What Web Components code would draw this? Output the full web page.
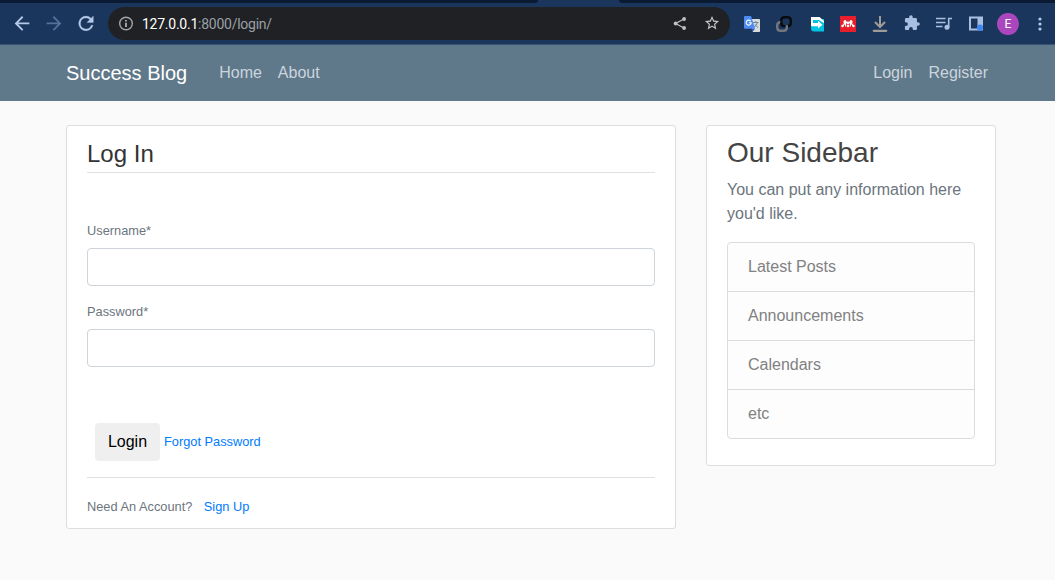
<!DOCTYPE html>
<html lang="en">
<head>
<meta charset="utf-8">
<title>Login</title>
<style>
body{margin:0;background:#fafafa;color:#333;font:16px/24px "Liberation Sans",Arial,sans-serif;height:580px;overflow:hidden}
main{display:flex;gap:30px;align-items:flex-start;width:930px;margin:24px 0 0 66px}
</style>
</head>
<body>
<browser-bar></browser-bar>
<site-nav></site-nav>
<main>
  <content-card style="--w:610px;--h:404px"><login-form></login-form></content-card>
  <content-card style="--w:290px;--h:341px"><side-bar></side-bar></content-card>
</main>
<script>
const define = (name, html) => customElements.define(name, class extends HTMLElement {
  constructor() {
    super();
    this.attachShadow({ mode: 'open' }).innerHTML = html;
  }
});

define('tool-slot', `
<style>:host{display:flex;width:32px;height:32px;flex:none;align-items:center;justify-content:center}</style><slot></slot>`);

define('browser-bar', `
<style>
:host{display:flex;flex-direction:column;height:45px;background:#1b365d;box-sizing:border-box;border-bottom:1px solid #3a5474;overflow:hidden}
.tabs{display:flex;justify-content:space-between;height:3px;flex:none}
.tabs i{background:#0b1a33;height:3px}
.l{width:538px;border-bottom-right-radius:4px}.r{width:436px;border-bottom-left-radius:4px}
.row{display:flex;align-items:center;height:41px;padding-left:6px;box-sizing:border-box}
.pill{display:flex;align-items:center;box-sizing:border-box;width:622px;height:33px;margin:0 6px;padding:0 2px 0 10px;border-radius:17px;background:#202124;flex:none}
.url{flex:1;margin-left:8px;font:14px/20px Roboto,sans-serif;letter-spacing:-.25px;color:#9aa0a6;white-space:nowrap}
.url b{font-weight:400;color:#fff}
svg{display:block;flex:none}
.avatar{width:22px;height:22px;border-radius:50%;background:#ab47bc;color:#fff;font:12px/22px Roboto,sans-serif;text-align:center}
</style>
<div class="tabs"><i class="l"></i><i class="r"></i></div>
<div class="row">
<tool-slot><svg width="22" height="22" viewBox="0 0.6 24 24" fill="#b5c9e8"><path d="M20 11H7.83l5.59-5.59L12 4l-8 8 8 8 1.41-1.41L7.83 13H20z"/></svg></tool-slot>
<tool-slot><svg width="22" height="22" viewBox="0 0.6 24 24" fill="#56709a"><path d="M4 11h12.17l-5.59-5.59L12 4l8 8-8 8-1.41-1.41L16.17 13H4z"/></svg></tool-slot>
<tool-slot><svg width="22" height="22" viewBox="0 0.6 24 24" fill="#b5c9e8"><path d="M17.65 6.35A7.96 7.96 0 0 0 12 4a8 8 0 1 0 7.73 10h-2.08A6 6 0 1 1 12 6c1.66 0 3.14.69 4.22 1.78L13 11h7V4z" stroke="#b5c9e8" stroke-width=".3"/></svg></tool-slot>
<div class="pill">
<svg width="16" height="16" viewBox="0 0 16 16"><circle cx="8" cy="7.500" r="6.300" fill="none" stroke="#a3a7ab" stroke-width="1.400"/><path d="M7.200 6.700h1.600v4.200H7.200zM7.200 4h1.600v1.600H7.200z" fill="#bdc1c6"/></svg>
<span class="url"><b>127.0.0.1</b>:8000/login/</span>
<tool-slot><svg width="16" height="16" viewBox="0 0 16 16" fill="#bfc1c4"><path d="m12 3-8.500 4.500L12 12" fill="none" stroke="#bfc1c4" stroke-width="1.200"/><circle cx="12.100" cy="3" r="1.900"/><circle cx="3.600" cy="7.500" r="1.900"/><circle cx="12.100" cy="12" r="1.900"/></svg></tool-slot>
<tool-slot><svg width="17" height="17" viewBox=".7 .7 24 24" fill="#c4c6c9"><path d="M22 9.240l-7.190-.62L12 2 9.190 8.630 2 9.240l5.460 4.730L5.820 21 12 17.270 18.180 21l-1.630-7.030L22 9.240zM12 15.400l-3.760 2.270 1-4.280-3.320-2.880 4.380-.38L12 6.100l1.710 4.040 4.380.38-3.320 2.880 1 4.280L12 15.400z"/></svg></tool-slot>
</div>
<tool-slot><svg width="16" height="16" viewBox="0 0 16 16"><path d="M6 3h9.2q.8 0 .8.8v11.4q0 .8-.8.8H9z" fill="#d9dcdd"/><path d="M9 6.500h5.500M11.800 5v1.500M13.500 6.500Q12.500 10 10 11M10.800 8.500l3.400 3.200" stroke="#718692" fill="none"/><path d="M7.500 12.800h3.600L8.300 16z" fill="#3b54a8"/><path d="M1 0h6l4.200 12.800H1q-1 0-1-1V1q0-1 1-1z" fill="#4d8bf5"/><path d="M6.700 5.100A2.500 2.500 0 1 0 7.200 6.700H4.900" stroke="#fff" stroke-width="1.100" fill="none"/></svg></tool-slot>
<tool-slot><svg width="16" height="16" viewBox="0 0 16 16" fill="none" stroke-width="2.400"><path d="M5.200 7V4.500q0-3.300 3.300-3.300h3q3.300 0 3.300 3.300v2.300q0 3.300-3.300 3.300" stroke="#090b0e"/><path d="M4.500 6.200q-3.300 0-3.300 3.300v2q0 3.300 3.300 3.300h3q3.300 0 3.300-3.300V9.300" stroke="#73777d"/><path d="M5.200 6.400q0 3.700 3.300 3.700h.9" stroke="#090b0e"/></svg></tool-slot>
<tool-slot><svg width="16" height="16" viewBox="0 0 16 16"><path d="M4 3h12v12.500H6q-3 0-3-3z" fill="#00c4e4"/><path d="M3 1h8.500L16 5v2l-5-3H5v3h5V4.800l4.500 3.900-4.500 3.900v-2.400H3z" fill="#fff"/></svg></tool-slot>
<tool-slot><svg width="16" height="16" viewBox="0 0 16 16"><path d="M0 0h16v16H0z" fill="#e81e2c"/><g fill="#fff"><circle cx="5" cy="5.600" r="1.500"/><circle cx="8" cy="7" r="1.400"/><circle cx="11" cy="5.600" r="1.500"/><circle cx="2.500" cy="10" r="1.200"/><circle cx="8" cy="10" r="1.200"/><circle cx="13.500" cy="10" r="1.200"/></g><path d="M2.800 9.800Q4.400 8.800 4.500 6M5.400 6q.1 3 .4 4.500M13.200 9.800Q11.600 8.800 11.500 6M10.600 6q-.1 3-.4 4.500M5.200 6l2.800 1.200L10.800 6" fill="none" stroke="#fff" stroke-width="1.200"/></svg></tool-slot>
<tool-slot><svg width="16" height="16" viewBox="0 0 16 16" fill="none" stroke="#9d9c99" stroke-width="2"><path d="M8 0v10.500M3 6l5 5 5-5"/><path d="M1.800 14.800h12.400" stroke-width="2.300" stroke-linecap="round"/></svg></tool-slot>
<tool-slot><svg width="17" height="17" viewBox=".7 .7 24 24" fill="#a9bfe2"><path d="M20.500 11H19V7c0-1.100-.9-2-2-2h-4V3.500a2.500 2.500 0 0 0-5 0V5H4c-1.100 0-1.990.9-1.990 2v3.800H3.500a2.700 2.700 0 0 1 0 5.400H2V20c0 1.100.9 2 2 2h3.800v-1.500a2.700 2.700 0 0 1 5.400 0V22H17c1.100 0 2-.9 2-2v-4h1.500a2.500 2.500 0 0 0 0-5z"/></svg></tool-slot>
<tool-slot><svg width="16" height="14" viewBox="0 1 16 14"><path d="M0 2.500h9.500M0 6.500h9.500M0 10.500h6.500M12.700 11V2.500H16" fill="none" stroke="#a9bfe2" stroke-width="1.600"/><circle cx="11" cy="11.300" r="2.500" fill="#a9bfe2"/></svg></tool-slot>
<tool-slot><svg width="16" height="16" viewBox="0 0 16 16"><path d="M1 .5h14v14H1zM3 2.500v10h6.500v-10z" fill="#a9bfe2" fill-rule="evenodd"/><circle cx="12" cy="11.700" r="3.100" fill="#4285f4"/></svg></tool-slot>
<tool-slot><div class="avatar">E</div></tool-slot>
<tool-slot><svg width="4" height="14" viewBox="0 0 4 14" fill="#b5c9e8"><circle cx="2" cy="2" r="1.600"/><circle cx="2" cy="7" r="1.600"/><circle cx="2" cy="12" r="1.600"/></svg></tool-slot>
</div>`);

define('site-nav', `
<style>
:host{display:flex;box-sizing:border-box;height:56px;align-items:center;background:#5f788a;padding:0 59px 0 66px;color:#cbd5dd}
.brand{color:#fff;font-size:20px;margin-right:24px}
a{padding:0 8px}
.end{margin-left:auto}
</style>
<span class="brand">Success Blog</span><a>Home</a><a>About</a><a class="end">Login</a><a>Register</a>`);

define('content-card', `
<style>:host{display:block;box-sizing:border-box;width:var(--w);height:var(--h);flex:none;padding:10px 20px;background:#fff;border:1px solid #ddd;border-radius:3px}</style><slot></slot>`);

define('form-field', `
<style>
:host{display:block;margin-bottom:16px}
label{display:block;font-size:12.8px;line-height:19px;height:19px;margin-bottom:8px;color:#6c757d}
input{display:block;box-sizing:border-box;width:100%;height:38px;border:1px solid #ced4da;border-radius:4px;background:#fff;padding:6px 12px}
</style><label><slot></slot></label><input>`);

define('login-form', `
<style>
:host{display:block;font-size:12.8px;color:#6c757d}
h2{margin:0 0 48px;font-weight:400;font-size:24px;line-height:36px;color:#333;border-bottom:1px solid #dee2e6}
.actions{display:flex;align-items:center;gap:4px;margin:56px 0 16px 8px}
button{width:65px;height:38px;padding:0;border:0;border-radius:4px;background:#efefef;color:#000;font:16px/24px "Liberation Sans",Arial,sans-serif}
a{color:#007bff}
.foot{display:flex;gap:11.500px;border-top:1px solid #dfdfdf;padding-top:17px}
</style>
<h2>Log In</h2>
<form-field>Username*</form-field>
<form-field>Password*</form-field>
<div class="actions"><button>Login</button><a>Forgot Password</a></div>
<div class="foot"><span>Need An Account?</span><a>Sign Up</a></div>`);

define('side-bar', `
<style>
:host{display:block;color:#6c757d}
h3{margin:0 0 8px;font-weight:400;font-size:28px;line-height:34px;color:#444}
p{margin:0 0 16px}
ul{margin:0;padding:0;list-style:none;border:1px solid #dcdcdd;border-radius:4px;background:#fdfdfd;color:#818182}
li{height:48px;line-height:48px;padding-left:20px}
li+li{border-top:1px solid #dcdcdd}
</style>
<h3>Our Sidebar</h3>
<p>You can put any information here you'd like.</p>
<ul><li>Latest Posts</li><li>Announcements</li><li>Calendars</li><li>etc</li></ul>`);
</script>
</body>
</html>
